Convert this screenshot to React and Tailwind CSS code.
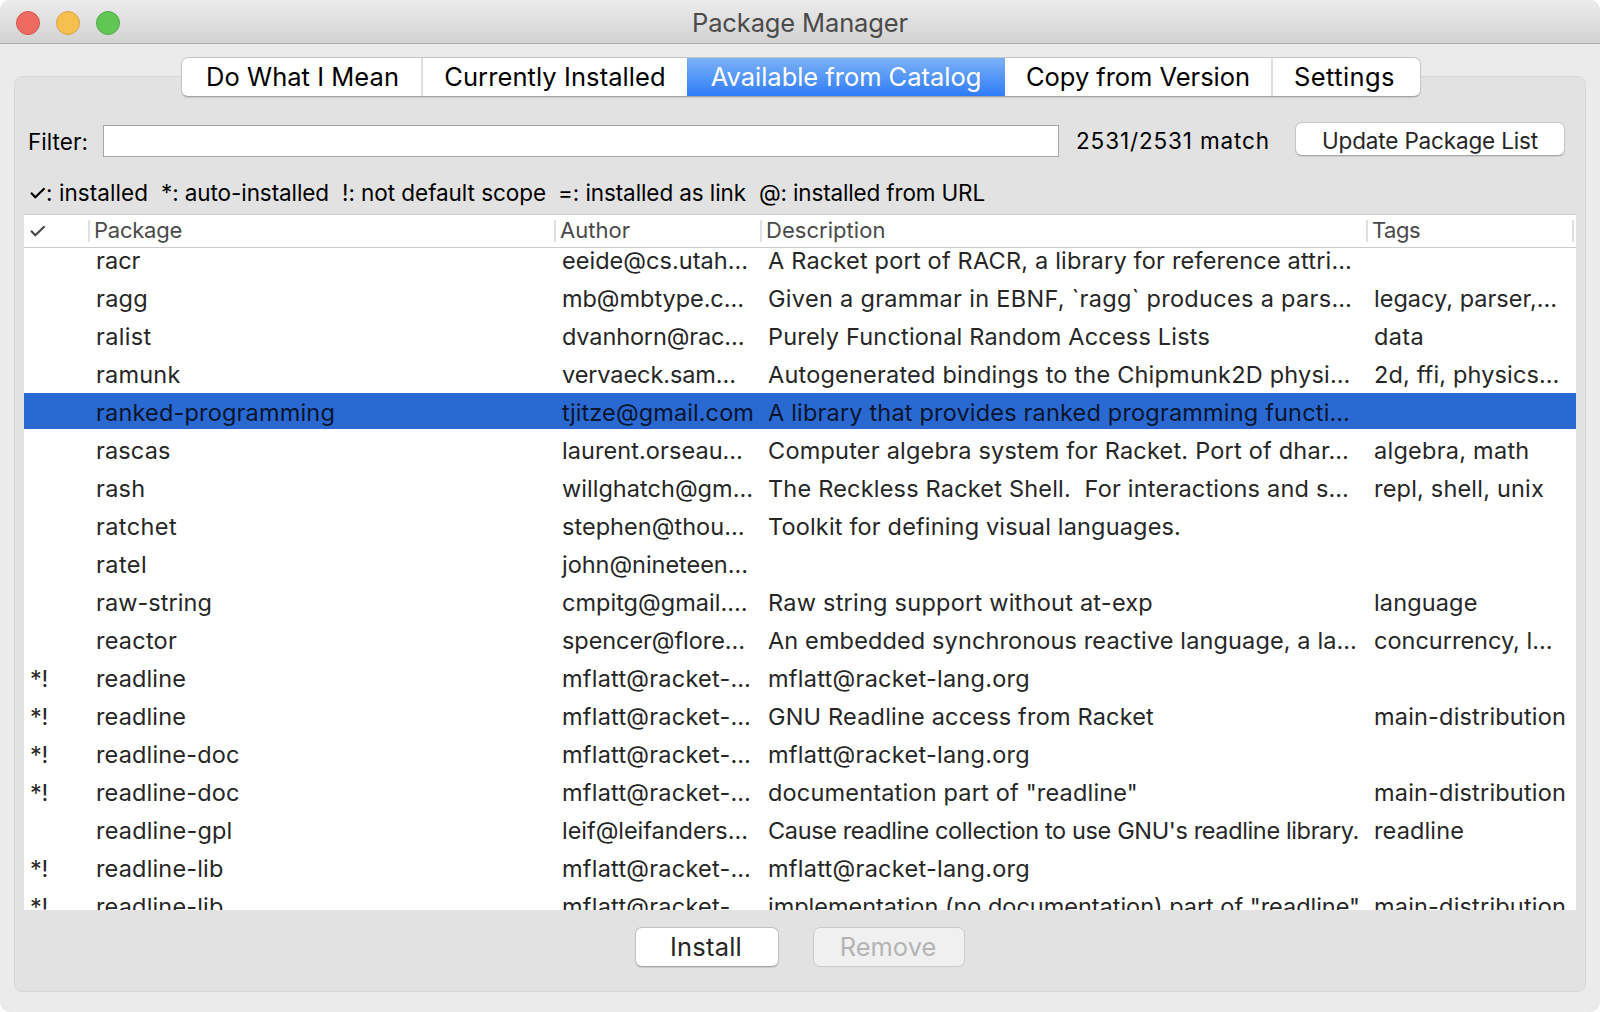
import { useLayoutEffect, useRef } from "react";

// Text whose tracking is adjusted so that it spans `w` pixels.
function Fit({ w, className = "", children }) {
  const ref = useRef(null);
  useLayoutEffect(() => {
    const el = ref.current;
    el.style.letterSpacing = "0px";
    const natural = el.getBoundingClientRect().width;
    el.style.letterSpacing = `${(w - natural) / el.textContent.length}px`;
  }, [w, children]);
  return (
    <span ref={ref} className={`inline-block shrink-0 whitespace-pre ${className}`}>
      {children}
    </span>
  );
}

function Check({ className = "" }) {
  return (
    <svg viewBox="0 0 16 12" className={`h-3 w-4 shrink-0 ${className}`} fill="none" stroke="currentColor" strokeWidth="2.2">
      <path d="M1 5.8 L5.3 10.2 L14.6 1.2" />
    </svg>
  );
}

const MFLATT = ["mflatt@racket-…", 189];
const ORG = ["mflatt@racket-lang.org", 262];
const MAIN = ["main-distribution", 192];

const rows = [
  { pkg: ["racr", 44.5], author: ["eeide@cs.utah…", 186], desc: ["A Racket port of RACR, a library for reference attri…", 584] },
  { pkg: ["ragg", 52], author: ["mb@mbtype.c…", 182], desc: ["Given a grammar in EBNF, `ragg` produces a pars…", 584], tags: ["legacy, parser,…", 183] },
  { pkg: ["ralist", 55.5], author: ["dvanhorn@rac…", 182.5], desc: ["Purely Functional Random Access Lists", 442], tags: ["data", 50] },
  { pkg: ["ramunk", 84.5], author: ["vervaeck.sam…", 174], desc: ["Autogenerated bindings to the Chipmunk2D physi…", 582.5], tags: ["2d, ffi, physics…", 185.5] },
  { pkg: ["ranked-programming", 239], author: ["tjitze@gmail.com", 192], desc: ["A library that provides ranked programming functi…", 582], selected: true },
  { pkg: ["rascas", 74.5], author: ["laurent.orseau…", 181], desc: ["Computer algebra system for Racket. Port of dhar…", 581], tags: ["algebra, math", 155.5] },
  { pkg: ["rash", 49.5], author: ["willghatch@gm…", 191], desc: ["The Reckless Racket Shell.  For interactions and s…", 581], tags: ["repl, shell, unix", 170] },
  { pkg: ["ratchet", 81], author: ["stephen@thou…", 182.5], desc: ["Toolkit for defining visual languages.", 413] },
  { pkg: ["ratel", 51], author: ["john@nineteen…", 186] },
  { pkg: ["raw-string", 116], author: ["cmpitg@gmail.…", 185.5], desc: ["Raw string support without at-exp", 385], tags: ["language", 103.5] },
  { pkg: ["reactor", 81], author: ["spencer@flore…", 183], desc: ["An embedded synchronous reactive language, a la…", 589], tags: ["concurrency, l…", 178.5] },
  { mark: true, pkg: ["readline", 90], author: MFLATT, desc: ORG },
  { mark: true, pkg: ["readline", 90], author: MFLATT, desc: ["GNU Readline access from Racket", 386], tags: MAIN },
  { mark: true, pkg: ["readline-doc", 143.5], author: MFLATT, desc: ORG },
  { mark: true, pkg: ["readline-doc", 143.5], author: MFLATT, desc: ['documentation part of "readline"', 370], tags: MAIN },
  { pkg: ["readline-gpl", 136.5], author: ["leif@leifanders…", 186], desc: ["Cause readline collection to use GNU's readline library.", 591], tags: ["readline", 90] },
  { mark: true, pkg: ["readline-lib", 127.5], author: MFLATT, desc: ORG },
  { mark: true, pkg: ["readline-lib", 127.5], author: MFLATT, desc: ['implementation (no documentation) part of "readline"', 592], tags: MAIN },
];

const COLS = "grid grid-cols-[72px_466px_206px_606px_202px]";
const HEAD = "-ml-2 flex items-center border-l-2 border-[#e0e0e0] pl-1 pb-0.5";

function Cell({ value }) {
  return <div>{value && <Fit w={value[1]}>{value[0]}</Fit>}</div>;
}

function Tab({ w, className = "", children }) {
  return (
    <div className={`flex h-full items-center justify-center ${className}`}>
      <Fit w={w}>{children}</Fit>
    </div>
  );
}

export default function App() {
  return (
    <div className="h-[1012px] w-[1600px] overflow-hidden bg-white font-['Inter',sans-serif] text-black">
      <div className="flex h-full flex-col overflow-hidden rounded-[10px] bg-[#ebebeb]">
        <header className="grid h-11 shrink-0 grid-cols-[1fr_auto_1fr] items-center border-b border-[#adadad] bg-linear-to-b from-[#ececec] to-[#d2d2d2]">
          <div className="flex gap-4 pt-px pl-4">
            <i className="size-6 rounded-full border border-[#d6574e] bg-[#ed6b60]" />
            <i className="size-6 rounded-full border border-[#d9a445] bg-[#f5c04f]" />
            <i className="size-6 rounded-full border border-[#4fae45] bg-[#62c655]" />
          </div>
          <Fit w={216} className="pt-0.5 text-[25.5px] leading-[42px] text-[#4b4b4b]">Package Manager</Fit>
          <div />
        </header>

        <main className="mx-3.5 mt-8 mb-5 flex min-h-0 grow flex-col rounded-lg border border-[#d7d7d7] bg-[#e2e2e2]">
          <nav className="-mt-5 ml-[166px] flex h-10 w-[1240px] shrink-0 overflow-hidden rounded-[7px] border border-[#c6c6c6] border-b-[#a5a5a5] bg-white text-[25.5px] leading-[38px] shadow-[0_1px_1px_rgba(0,0,0,0.12)]">
            <Tab w={193} className="w-[241px] border-r-2 border-[#e0e0e0] pl-0.5">Do What I Mean</Tab>
            <Tab w={221.5} className="w-[264px]">Currently Installed</Tab>
            <Tab w={270.5} className="-my-px h-[40px]! w-[318px] border-t border-b border-t-[#6a9fe8] border-b-[#2f62cc] bg-linear-to-b from-[#7bb1f5] to-[#2f7bf7] text-white">Available from Catalog</Tab>
            <Tab w={224} className="w-[268px] border-r-2 border-[#e0e0e0]">Copy from Version</Tab>
            <Tab w={101} className="w-[147px] pr-1">Settings</Tab>
          </nav>

          <div className="mt-[25px] flex h-[34px] shrink-0 items-center pl-[13px] text-[22.5px]">
            <Fit w={60} className="pt-[6px]">Filter:</Fit>
            <div className="mt-[3px] ml-[15px] h-8 w-[956px] shrink-0 border border-[#a6a6a6] bg-white" />
            <Fit w={194} className="ml-[17px] pt-[3px]">2531/2531 match</Fit>
            <button className="ml-[25px] flex h-[34px] w-[270px] shrink-0 items-center justify-center rounded-[7px] border border-[#c6c6c6] border-b-[#a8a8a8] bg-white pt-[3px] text-[#262626] shadow-[0_1px_1px_rgba(0,0,0,0.1)]">
              <Fit w={216}>Update Package List</Fit>
            </button>
          </div>

          <div className="mt-[22px] flex h-7 shrink-0 items-center pl-[15px] text-[22.5px]">
            <Check className="mt-0.5" />
            <Fit w={102} className="pt-px">: installed</Fit>
            <Fit w={168} className="ml-[13px] pt-px">*: auto-installed</Fit>
            <Fit w={204} className="ml-[13px] pt-px">!: not default scope</Fit>
            <Fit w={188} className="ml-[12px] pt-px">=: installed as link</Fit>
            <Fit w={226} className="ml-[13px] pt-px">@: installed from URL</Fit>
          </div>

          <section className="mt-2 ml-[9px] flex h-[696px] w-[1552px] shrink-0 flex-col overflow-hidden bg-white">
            <div className={`${COLS} h-[34px] shrink-0 grid-rows-[22px] border-t border-b border-t-[#cfcfcf] border-b-[#cbcbcb] pt-[5px] text-[22px] text-[#4a4a4a]`}>
              <div className="flex items-center pb-px pl-1.5">
                <Check />
              </div>
              <div className={HEAD}>
                <Fit w={88}>Package</Fit>
              </div>
              <div className={HEAD}>
                <Fit w={70}>Author</Fit>
              </div>
              <div className={HEAD}>
                <Fit w={119.5}>Description</Fit>
              </div>
              <div className={`${HEAD} mr-[2px] border-r-2`}>
                <Fit w={48}>Tags</Fit>
              </div>
            </div>
            <div className="min-h-0 grow overflow-hidden text-[23.5px] text-[#262626]">
              <div className="-mt-[7px]">
                {rows.map((r, i) => (
                  <div key={i} className="h-[38px]">
                    <div className={r.selected ? `${COLS} h-9 bg-[#2969d1] leading-[40px] text-[#0a1530]` : `${COLS} h-9 leading-[40px]`}>
                      <div className="pl-1.5">{r.mark && <Fit w={18}>*!</Fit>}</div>
                      <Cell value={r.pkg} />
                      <Cell value={r.author} />
                      <Cell value={r.desc} />
                      <Cell value={r.tags} />
                    </div>
                  </div>
                ))}
              </div>
            </div>
          </section>

          <footer className="mt-[17px] flex h-10 shrink-0 pl-[620px] text-[25.5px] leading-[38px]">
            <button className="flex w-[144px] items-center justify-center rounded-[7px] border border-[#c2c2c2] border-b-[#a5a5a5] bg-white pr-0.5 text-[#262626] shadow-[0_1px_1px_rgba(0,0,0,0.12)]">
              <Fit w={72}>Install</Fit>
            </button>
            <button disabled className="ml-[34px] flex w-[152px] items-center justify-center rounded-[7px] border border-[#cacaca] bg-[#f0f0f0] pr-0.5 text-[#b4b4b4]">
              <Fit w={96.5}>Remove</Fit>
            </button>
          </footer>
        </main>
      </div>
    </div>
  );
}
